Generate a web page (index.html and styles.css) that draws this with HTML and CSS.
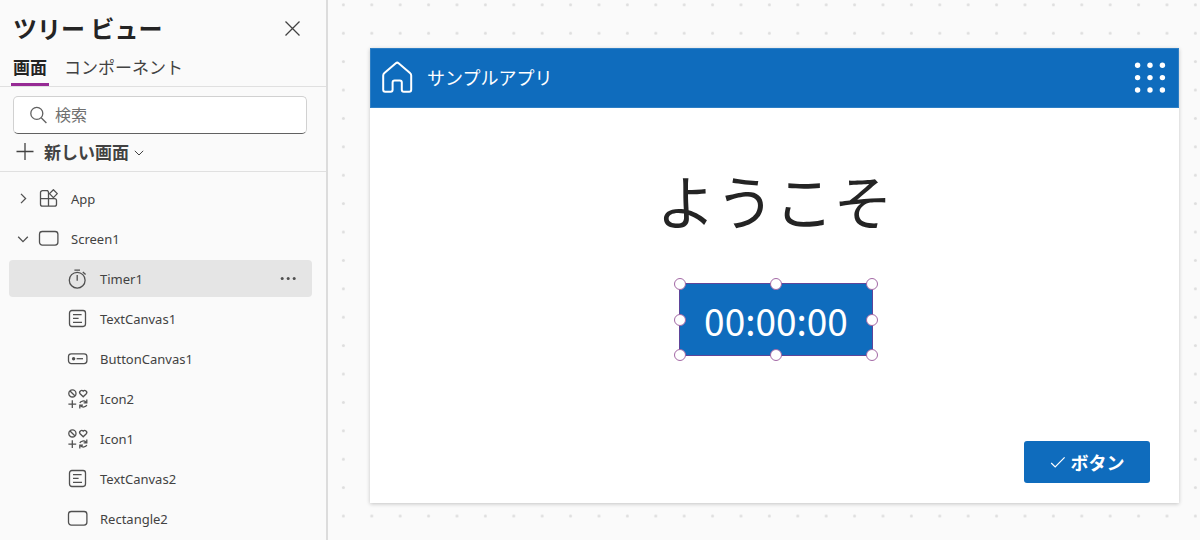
FILE: index.html
```html
<!DOCTYPE html>
<html lang="ja">
<head>
<meta charset="utf-8">
<meta name="viewport" content="width=device-width, initial-scale=1">
<title>ツリー ビュー</title>
<link rel="stylesheet" href="styles.css">
</head>
<body>
<svg class="symbols" aria-hidden="true">
  <symbol id="i-text" viewBox="0 0 22 22"><rect x="2.5" y="2.5" width="16" height="16" rx="2.4"/><path d="M6 6.600h8.600M6 10.400h5.600M6 14.300h9"/></symbol>
  <symbol id="i-rect" viewBox="0 0 22 22"><rect x="1.500" y="3.500" width="18.400" height="13.600" rx="2.800"/></symbol>
  <symbol id="i-icons" viewBox="0 0 22 22"><circle cx="5.400" cy="5.400" r="3.600"/><path d="M3 3l4.800 4.800M1.400 16.200h7.800M5.300 12.300v7.800M16.200 8.800l-3.100-3.100a1.900 1.900 0 0 1 3.100-2.500 1.900 1.900 0 0 1 3.100 2.500zM12.800 15c.9-2.200 4.400-2.800 6.200-.8M19.800 11.600v3.200h-3.200M19.800 17c-.9 2.200-4.400 2.800-6.200.8M12.800 20.400v-3.200h3.200"/></symbol>
</svg>
<div class="studio">
  <aside class="panel">
    <header class="panel-head">
      <h1 class="panel-title">ツリー ビュー</h1>
      <button class="ghost close" type="button" aria-label="閉じる"><svg class="icon" viewBox="0 0 22 22"><path d="M4.500 4.500l14 14M18.500 4.500l-14 14"/></svg></button>
    </header>
    <div class="tabs" role="tablist">
      <button class="tab active" type="button" role="tab" aria-selected="true">画面</button>
      <button class="tab" type="button" role="tab" aria-selected="false">コンポーネント</button>
    </div>
    <div class="tools">
      <label class="search">
        <svg class="icon" viewBox="0 0 22 22"><circle cx="8.800" cy="9.400" r="6"/><path d="M13.200 13.800l5.200 5.200"/></svg>
        <input class="search-input" type="text" placeholder="検索" aria-label="検索">
      </label>
      <button class="ghost new-screen" type="button">
        <svg class="icon" viewBox="0 0 22 22"><path d="M2.500 10.500h17M11 2v17"/></svg>
        <span>新しい画面</span>
        <svg class="chevron-small" viewBox="0 0 12 12"><path d="M1.800 4.800l4.200 4.200 4.200-4.200"/></svg>
      </button>
    </div>
    <ul class="tree">
      <li class="row">
        <svg class="chevron" viewBox="0 0 18 18"><path d="M7 3.900l4.600 4.600L7 13.100"/></svg>
        <svg class="icon" viewBox="0 0 22 22"><path d="M10.200 2.600H4.500a2 2 0 0 0-2 2v11.600a2 2 0 0 0 2 2h12a2 2 0 0 0 2-2v-3.600a2 2 0 0 0-2-2h-14M10.500 18.200V4.600a2 2 0 0 0-2-2M15.400 1.700l3.900 3.900-3.900 4-3.900-4z" stroke-linejoin="round"/></svg>
        <span class="name">App</span>
      </li>
      <li class="row">
        <svg class="chevron" viewBox="0 0 18 18"><path d="M4.200 6.800L9 11.600l4.800-4.800"/></svg>
        <svg class="icon"><use href="#i-rect"/></svg>
        <span class="name">Screen1</span>
      </li>
      <li class="row child selected">
        <svg class="icon" viewBox="0 0 22 22"><circle cx="10.200" cy="12.200" r="7.900"/><path d="M10.200 7v5.800M7.400 2.200h5.600M15.800 3.900l2.800 2.600"/></svg>
        <span class="name">Timer1</span>
        <button class="ghost more" type="button" aria-label="その他"><svg class="icon solid" viewBox="0 0 22 22"><circle cx="5.200" cy="10.400" r="1.500"/><circle cx="11.200" cy="10.400" r="1.500"/><circle cx="17.200" cy="10.400" r="1.500"/></svg></button>
      </li>
      <li class="row child"><svg class="icon"><use href="#i-text"/></svg><span class="name">TextCanvas1</span></li>
      <li class="row child">
        <svg class="icon" viewBox="0 0 22 22"><rect x="1.500" y="5.800" width="18.400" height="9.800" rx="2.800"/><circle class="fill" cx="6.600" cy="10.700" r="1.700"/><path d="M9.600 10.700h6.400"/></svg>
        <span class="name">ButtonCanvas1</span>
      </li>
      <li class="row child"><svg class="icon"><use href="#i-icons"/></svg><span class="name">Icon2</span></li>
      <li class="row child"><svg class="icon"><use href="#i-icons"/></svg><span class="name">Icon1</span></li>
      <li class="row child"><svg class="icon"><use href="#i-text"/></svg><span class="name">TextCanvas2</span></li>
      <li class="row child"><svg class="icon"><use href="#i-rect"/></svg><span class="name">Rectangle2</span></li>
    </ul>
  </aside>
  <main class="canvas">
    <svg class="dots" aria-hidden="true">
      <defs><pattern id="dot-grid" x="1.200" y="-9.400" width="28.400" height="28.400" patternUnits="userSpaceOnUse"><circle cx="14.200" cy="14.200" r="1.500"/></pattern></defs>
      <rect width="100%" height="100%" fill="url(#dot-grid)"/>
    </svg>
    <section class="stage">
      <header class="app-bar">
        <svg class="home" viewBox="0 0 32 34"><path d="M13.400 2.200a2.200 2.200 0 0 1 2.800 0l11.400 9.800c.8.700 1.200 1.600 1.200 2.600v14.200a2 2 0 0 1-2 2h-5.400a2 2 0 0 1-2-2v-7.400a2 2 0 0 0-2-2h-5.200a2 2 0 0 0-2 2v7.400a2 2 0 0 1-2 2H2.800a2 2 0 0 1-2-2V14.600c0-1 .4-1.900 1.200-2.600z" transform="translate(.4 0)"/></svg>
        <span class="app-name">サンプルアプリ</span>
        <svg class="waffle" viewBox="0 0 32 32"><circle cx="3.600" cy="3.200" r="2.700"/><circle cx="16" cy="3.200" r="2.700"/><circle cx="28.400" cy="3.200" r="2.700"/><circle cx="3.600" cy="15.600" r="2.700"/><circle cx="16" cy="15.600" r="2.700"/><circle cx="28.400" cy="15.600" r="2.700"/><circle cx="3.600" cy="28" r="2.700"/><circle cx="16" cy="28" r="2.700"/><circle cx="28.400" cy="28" r="2.700"/></svg>
      </header>
      <h2 class="welcome">ようこそ</h2>
      <div class="timer">
        <span>00:00:00</span>
        <i class="handle left top"></i><i class="handle center top"></i><i class="handle right top"></i>
        <i class="handle left middle"></i><i class="handle right middle"></i>
        <i class="handle left bottom"></i><i class="handle center bottom"></i><i class="handle right bottom"></i>
      </div>
      <button class="primary" type="button"><svg class="check" viewBox="0 0 16 16"><path d="M1.200 9l4 4L14.600 3.400"/></svg>ボタン</button>
    </section>
  </main>
</div>
</body>
</html>
```
FILE: styles.css
```css
* { box-sizing: border-box; }

body {
  margin: 0;
  background: #fafafa;
  color: #424242;
  font-family: "Noto Sans CJK JP", sans-serif;
  font-size: 16px;
}

button, input { font: inherit; color: inherit; }

.symbols { position: absolute; width: 0; height: 0; }

.studio {
  display: grid;
  grid-template-columns: 328px 1fr;
  height: 100vh;
  overflow: hidden;
}

.icon, .chevron, .chevron-small, .check, .home {
  flex: none;
  fill: none;
  stroke: currentColor;
  stroke-width: 1.3;
}
.icon { width: 22px; height: 22px; }
.icon .fill, .icon.solid { fill: currentColor; stroke: none; }
.chevron { width: 18px; height: 18px; }
.chevron-small { width: 12px; height: 12px; stroke-width: 1; }

.ghost {
  display: flex;
  align-items: center;
  padding: 0;
  border: 0;
  background: none;
}

.panel {
  border-right: 2px solid #dcdcdc;
  overflow: hidden;
}

.panel-head {
  display: flex;
  align-items: center;
  justify-content: space-between;
  height: 55px;
  padding: 0 23px 0 13px;
}
.panel-title {
  margin: 0;
  color: #242424;
  font-size: 24px;
  line-height: 32px;
}

.tabs {
  display: flex;
  gap: 13px;
  height: 32px;
  padding-left: 11px;
  border-bottom: 1px solid #e0e0e0;
}
.tab {
  padding: 0 2px 5px;
  border: 0;
  border-bottom: 3px solid transparent;
  background: none;
  font-size: 17px;
  line-height: 23px;
}
.tab.active {
  border-bottom-color: #962a94;
  color: #242424;
  font-weight: 700;
}

.tools {
  display: flex;
  flex-direction: column;
  padding: 9px 19px 0 13px;
  height: 85px;
  border-bottom: 1px solid #e0e0e0;
}
.search {
  display: flex;
  align-items: center;
  gap: 5px;
  height: 38px;
  padding: 0 14px;
  border: 1px solid #d1d1d1;
  border-bottom-color: #616161;
  border-radius: 5px;
  background: #fff;
  color: #616161;
}
.search-input {
  flex: 1;
  min-width: 0;
  padding: 0 0 2px;
  border: 0;
  outline: 0;
  background: none;
  line-height: 24px;
}
.search-input::placeholder { color: #707070; }
.new-screen {
  gap: 8px;
  height: 36px;
  padding: 0 0 1px 1px;
  font-size: 17px;
  font-weight: 700;
}
.new-screen .chevron-small { margin-left: -4px; }

.tree {
  display: flex;
  flex-direction: column;
  gap: 3px;
  margin: 0;
  padding: 8px 14px 0 9px;
  list-style: none;
  font-family: "Noto Sans", "Open Sans", sans-serif;
  font-size: 13px;
}
.row {
  display: flex;
  align-items: center;
  height: 37px;
  padding: 0 13px 0 5px;
  border-radius: 4px;
}
.row .icon, .row .chevron { color: #505050; }
.row .chevron { margin-right: 6px; }
.row .name { flex: 1; padding-left: 11px; }
.row.child { padding-left: 58px; }
.row.selected { background: #e5e5e5; }

.canvas {
  display: grid;
  overflow: hidden;
}
.dots {
  grid-area: 1 / 1;
  width: 100%;
  height: 100%;
  fill: #dedede;
}
.stage {
  grid-area: 1 / 1;
  display: flex;
  flex-direction: column;
  align-items: center;
  align-self: start;
  aspect-ratio: 16 / 9;
  margin: 48px 21px 0 42px;
  background: #fff;
  box-shadow: 0 1px 4px rgb(0 0 0 / 22%);
}

.app-bar {
  display: flex;
  align-items: center;
  align-self: stretch;
  height: 60px;
  padding: 0 12px 0 11px;
  border: 1px solid #2e7fc5;
  background: #0f6cbd;
  color: #fff;
  font-size: 18px;
}
.home { width: 32px; height: 34px; stroke-width: 2; }
.app-name { flex: 1; padding: 0 0 2px 13px; }
.waffle { width: 32px; height: 32px; fill: #fff; }

.welcome {
  margin: 48px 0 0;
  color: #242424;
  font-size: 59px;
  font-weight: 400;
  line-height: 88px;
}

.timer {
  position: relative;
  display: grid;
  place-items: center;
  width: 194px;
  height: 73px;
  margin: 39px 0 0 3px;
  border: 1px solid #5f4599;
  background: #0f6cbd;
  color: #fff;
  font-size: 37px;
  line-height: 56px;
}
.handle {
  position: absolute;
  width: 12px;
  height: 12px;
  border: 1px solid #a368a5;
  border-radius: 50%;
  background: #fff;
}
.left { left: -6px; }
.center { left: calc(50% - 6px); }
.right { right: -6px; }
.top { top: -6px; }
.middle { top: calc(50% - 6px); }
.bottom { bottom: -6px; }

.primary {
  display: flex;
  align-items: center;
  justify-content: center;
  align-self: flex-end;
  gap: 5px;
  width: 126px;
  height: 42px;
  margin: auto 29px 20px 0;
  padding: 0;
  border: 0;
  border-radius: 3px;
  background: #0f6cbd;
  color: #fff;
  font-size: 18px;
  font-weight: 700;
}
.check { width: 16px; height: 16px; stroke-width: 1.2; }
```
